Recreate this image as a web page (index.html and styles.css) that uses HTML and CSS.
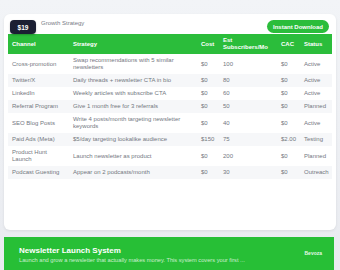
FILE: index.html
```html
<!DOCTYPE html>
<html>
<head>
<meta charset="utf-8">
<link rel="stylesheet" href="styles.css">
</head>
<body>
<div class="page">
  <div class="card">
    <div class="card-top">
      <span class="price">$19</span>
      <span class="title">Growth Strategy</span>
      <span class="btn">Instant Download</span>
    </div>
    <table class="tbl">
      <colgroup>
        <col class="c1"><col class="c2"><col class="c3"><col class="c4"><col class="c5"><col class="c6">
      </colgroup>
      <thead>
        <tr><th>Channel</th><th>Strategy</th><th>Cost</th><th>Est Subscribers/Mo</th><th>CAC</th><th>Status</th></tr>
      </thead>
      <tbody>
        <tr><td>Cross-promotion</td><td>Swap recommendations with 5 similar newsletters</td><td>$0</td><td>100</td><td>$0</td><td>Active</td></tr>
        <tr><td>Twitter/X</td><td>Daily threads + newsletter CTA in bio</td><td>$0</td><td>80</td><td>$0</td><td>Active</td></tr>
        <tr><td>LinkedIn</td><td>Weekly articles with subscribe CTA</td><td>$0</td><td>60</td><td>$0</td><td>Active</td></tr>
        <tr><td>Referral Program</td><td>Give 1 month free for 3 referrals</td><td>$0</td><td>50</td><td>$0</td><td>Planned</td></tr>
        <tr><td>SEO Blog Posts</td><td>Write 4 posts/month targeting newsletter keywords</td><td>$0</td><td>40</td><td>$0</td><td>Active</td></tr>
        <tr><td>Paid Ads (Meta)</td><td>$5/day targeting lookalike audience</td><td>$150</td><td>75</td><td>$2.00</td><td>Testing</td></tr>
        <tr><td>Product Hunt Launch</td><td>Launch newsletter as product</td><td>$0</td><td>200</td><td>$0</td><td>Planned</td></tr>
        <tr><td>Podcast Guesting</td><td>Appear on 2 podcasts/month</td><td>$0</td><td>30</td><td>$0</td><td>Outreach</td></tr>
      </tbody>
    </table>
  </div>
  <div class="footer">
    <div class="f-text">
      <div class="f-title">Newsletter Launch System</div>
      <div class="f-sub">Launch and grow a newsletter that actually makes money. This system covers your first ...</div>
    </div>
    <div class="brand">Bevoza</div>
  </div>
</div>
</body>
</html>
```
FILE: styles.css
```css
html, body {
  margin: 0;
  padding: 0;
  background: #eceef3;
  font-family: "Liberation Sans", Arial, sans-serif;
  overflow: hidden;
}
.page {
  width: 340px;
  height: 270px;
  padding: 14px 4px 0 4px;
  box-sizing: border-box;
  background: linear-gradient(#f2f4f7, #e9ebf0);
}
.card {
  background: #ffffff;
  border-radius: 6px;
  height: 216px;
  box-shadow: 0 1px 3px rgba(0,0,0,0.08);
  padding: 6px 4px 0 4px;
  box-sizing: border-box;
}
.card-top {
  display: flex;
  align-items: flex-start;
  gap: 5px;
  height: 14px;
  padding: 0 3px 0 2px;
}
.price {
  background: #1b1f33;
  color: #fff;
  font-weight: bold;
  font-size: 6.5px;
  height: 14px;
  width: 26px;
  border-radius: 4px;
  display: flex;
  align-items: center;
  justify-content: center;
  box-shadow: 0 1px 2px rgba(0,0,0,0.25);
}
.title {
  font-size: 6px;
  color: #777c86;
  line-height: 7px;
  flex: 1;
}
.btn {
  background: #2bbd3b;
  color: #fff;
  font-weight: bold;
  font-size: 6px;
  height: 13px;
  padding: 0 6px;
  border-radius: 7px;
  display: flex;
  align-items: center;
}
.tbl {
  width: 100%;
  table-layout: fixed;
  border-collapse: collapse;
  font-size: 6px;
  line-height: 7px;
}
.c1 { width: 61px; }
.c2 { width: 128px; }
.c3 { width: 22px; }
.c4 { width: 58px; }
.c5 { width: 23px; }
.c6 { width: 32px; }
.tbl th {
  background: #2bbd3b;
  color: #fff;
  font-weight: bold;
  text-align: left;
  padding: 3px 4px;
  vertical-align: middle;
}
.tbl td {
  color: #73777f;
  padding: 3px 4px;
  vertical-align: middle;
}
.tbl tbody tr:nth-child(even) td {
  background: #f6f7f9;
}
.footer {
  margin-top: 7px;
  background: #27bf36;
  height: 40px;
  width: 330px;
  display: flex;
  align-items: flex-start;
  padding: 9px 12px 0 15px;
  box-sizing: border-box;
}
.f-text {
  flex: 1;
}
.f-title {
  color: #fff;
  font-weight: bold;
  font-size: 8px;
  line-height: 10px;
}
.f-sub {
  color: rgba(255,255,255,0.75);
  font-size: 5.7px;
  line-height: 7px;
  margin-top: 1px;
}
.brand {
  color: rgba(255,255,255,0.9);
  font-weight: bold;
  font-size: 5px;
  margin-top: 4px;
}
```
